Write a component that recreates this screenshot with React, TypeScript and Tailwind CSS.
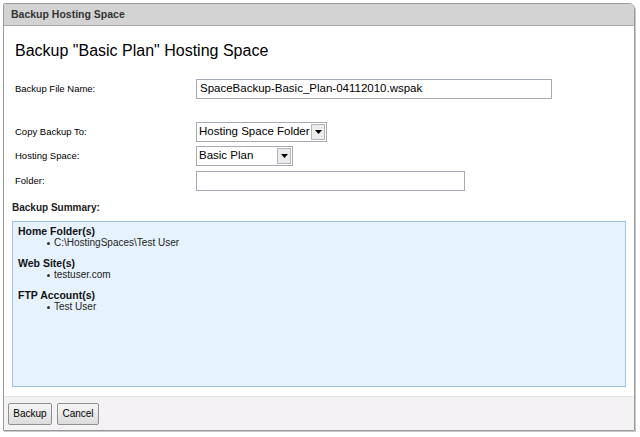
import React from 'react';

const sans = { fontFamily: '"Liberation Sans", Arial, sans-serif' };

const Label = ({ text }: { text: string }) => (
  <div className="w-[181px] text-[9.5px] text-black shrink-0">{text}</div>
);

const SelectBox = ({ value, width }: { value: string; width: string }) => (
  <div className={`flex items-center justify-between h-[20px] border border-[#a5acb5] bg-white whitespace-nowrap ${width}`}>
    <span className="pl-[2px] text-[11.5px] text-black leading-none">{value}</span>
    <span className="flex items-center justify-center w-[14px] h-[16px] mr-[1px] border border-[#b5b5b5] bg-[#ececec]">
      <svg width="7" height="4" viewBox="0 0 7 4"><path d="M0 0h7L3.5 4z" fill="#000" /></svg>
    </span>
  </div>
);

const SummaryGroup = ({ title, item }: { title: string; item: string }) => (
  <div className="mb-[8px]">
    <div className="text-[10.5px] font-bold text-[#111] leading-[12px]">{title}</div>
    <ul className="pl-[29px] text-[10px] text-[#222] leading-[12px]">
      <li className="flex items-center gap-[4px]">
        <span className="w-[3px] h-[3px] rounded-full bg-[#333]" />
        {item}
      </li>
    </ul>
  </div>
);

export default function App() {
  return (
    <div className="w-[640px] h-[437px] bg-white pt-[3px] pl-[3px]" style={sans}>
      <div className="w-[632px] h-[428px] flex flex-col border border-[#9a9a9a] rounded-tr-[6px] rounded-tl-[2px] shadow-[1px_1px_0_#c8c8c8] overflow-hidden">
        <div className="h-[22px] bg-[#d3d3d3] border-b border-[#a8a8a8] flex items-center pl-[7px] text-[10.5px] font-bold text-[#333]">
          Backup Hosting Space
        </div>
        <div className="flex-1 flex flex-col px-[8px] bg-white">
          <h1 className="pl-[3px] pt-[14px] text-[16px] text-black leading-[22px]">Backup "Basic Plan" Hosting Space</h1>
          <div className="flex items-center mt-[17px] pl-[3px]">
            <Label text="Backup File Name:" />
            <div className="w-[356px] h-[20px] border border-[#a5acb5] flex items-center pl-[3px] text-[11.5px] text-black">
              SpaceBackup-Basic_Plan-04112010.wspak
            </div>
          </div>
          <div className="flex items-center mt-[23px] pl-[3px]">
            <Label text="Copy Backup To:" />
            <SelectBox value="Hosting Space Folder" width="w-[131px]" />
          </div>
          <div className="flex items-center mt-[4px] pl-[3px]">
            <Label text="Hosting Space:" />
            <SelectBox value="Basic Plan" width="w-[97px]" />
          </div>
          <div className="flex items-center mt-[5px] pl-[3px]">
            <Label text="Folder:" />
            <div className="w-[269px] h-[20px] border border-[#a5acb5]" />
          </div>
          <div className="mt-[9px] text-[10px] font-bold text-[#222]">Backup Summary:</div>
          <div className="mt-[6px] h-[166px] border border-[#9cc3ea] bg-[#e6f2fd] pl-[5px] pt-[3px]">
            <SummaryGroup title="Home Folder(s)" item="C:\HostingSpaces\Test User" />
            <SummaryGroup title="Web Site(s)" item="testuser.com" />
            <SummaryGroup title="FTP Account(s)" item="Test User" />
          </div>
        </div>
        <div className="h-[34px] mt-[9px] bg-[#f5f2f5] border-t border-[#e6e3e6] flex items-center gap-[5px] pl-[4px]">
          <button className="h-[22px] w-[44px] text-[10px] text-black border border-[#8f8f8f] rounded-[2px] bg-gradient-to-b from-[#f6f6f6] to-[#dcdcdc]">Backup</button>
          <button className="h-[22px] w-[42px] text-[10px] text-black border border-[#8f8f8f] rounded-[2px] bg-gradient-to-b from-[#f6f6f6] to-[#dcdcdc]">Cancel</button>
        </div>
      </div>
    </div>
  );
}
